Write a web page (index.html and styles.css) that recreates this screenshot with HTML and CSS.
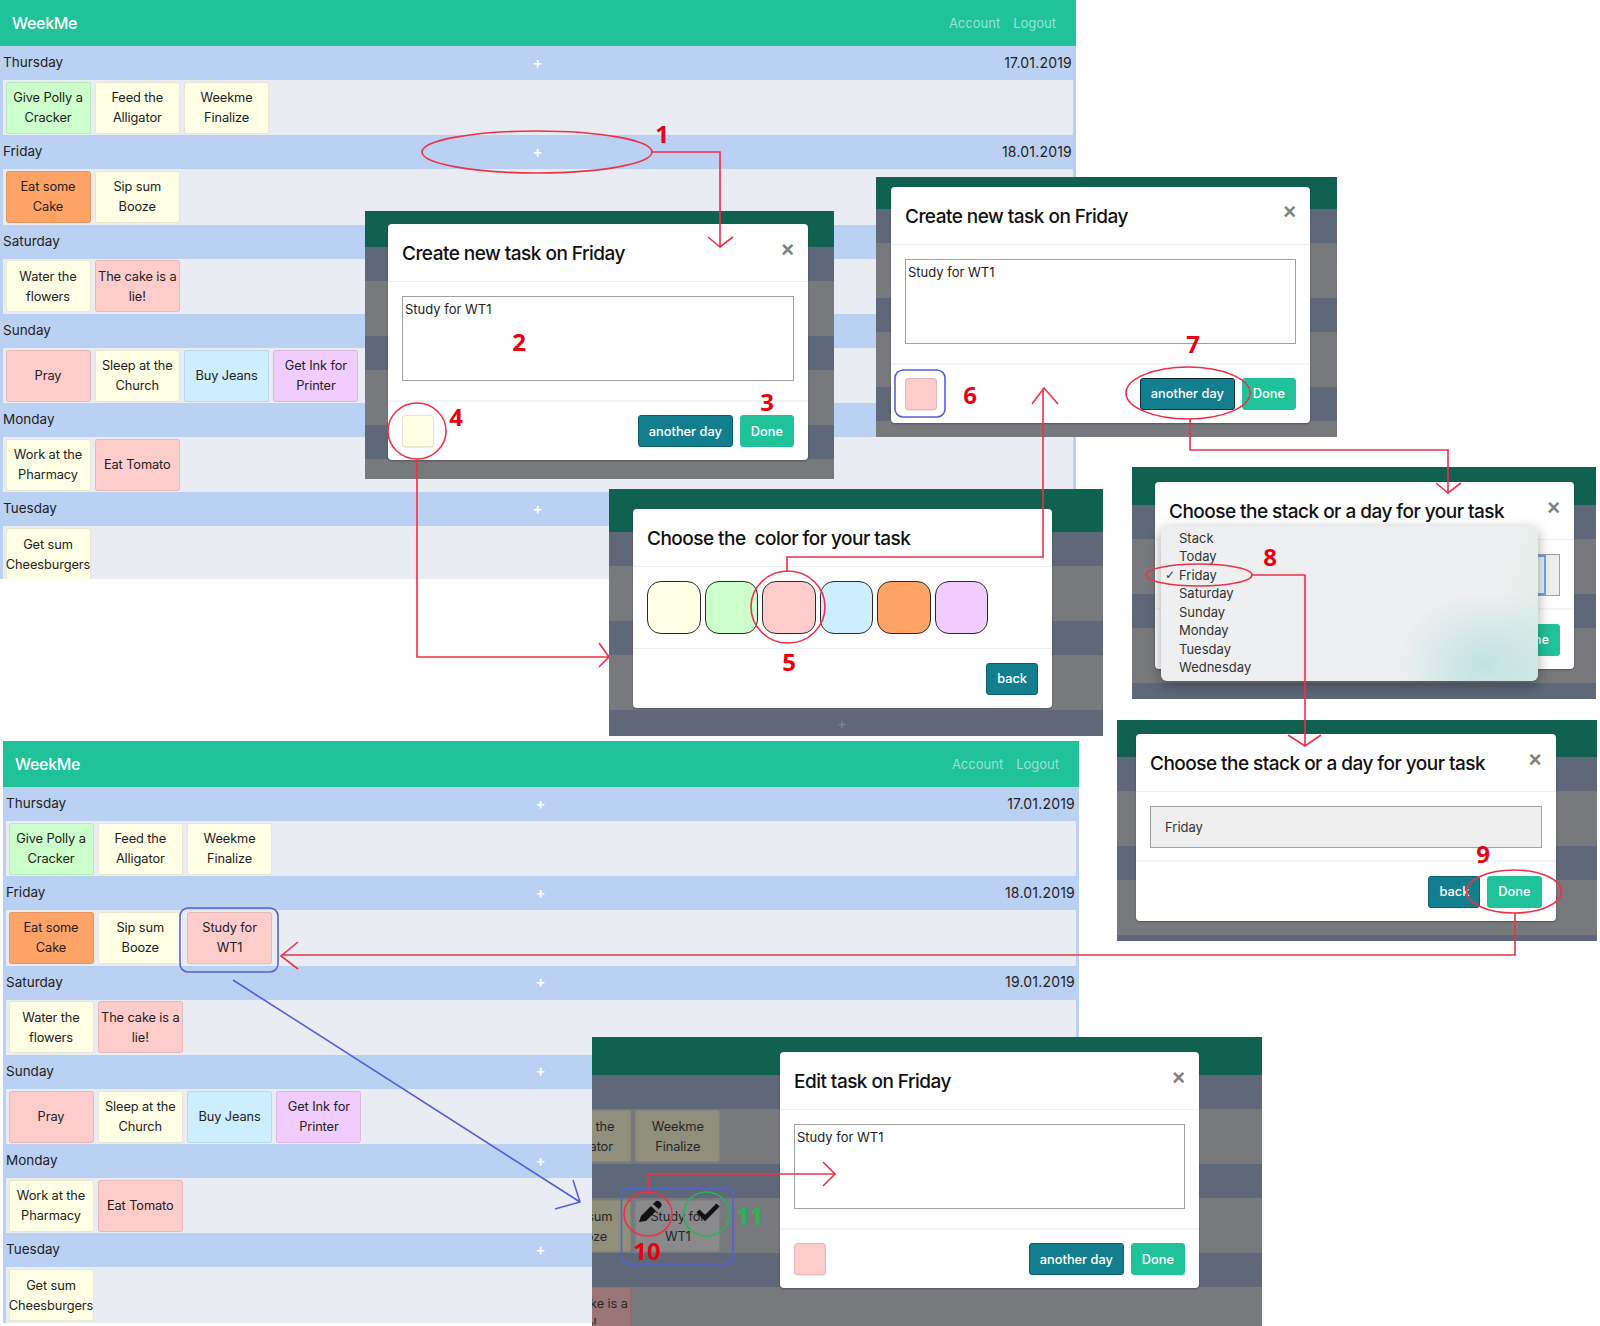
FILE: index.html
```html
<!DOCTYPE html>
<html lang="en">
<head>
<meta charset="utf-8">
<title>WeekMe flow</title>
<link rel="stylesheet" href="styles.css">
</head>
<body>
<div class="canvas">

  <section class="app app-top">
    <nav class="navbar"><span class="brand">WeekMe</span><span class="nav-links"><span>Account</span><span>Logout</span></span></nav>
    <div class="day-head"><span>Thursday</span><span class="plus">+</span><span class="date">17.01.2019</span></div>
    <div class="day-body"><div class="card green">Give Polly a Cracker</div><div class="card yellow">Feed the Alligator</div><div class="card yellow">Weekme Finalize</div></div>
    <div class="day-head"><span>Friday</span><span class="plus">+</span><span class="date">18.01.2019</span></div>
    <div class="day-body"><div class="card orange">Eat some Cake</div><div class="card yellow">Sip sum Booze</div></div>
    <div class="day-head"><span>Saturday</span><span class="plus">+</span><span class="date">19.01.2019</span></div>
    <div class="day-body"><div class="card yellow">Water the flowers</div><div class="card pink">The cake is a lie!</div></div>
    <div class="day-head"><span>Sunday</span><span class="plus">+</span><span class="date">20.01.2019</span></div>
    <div class="day-body"><div class="card pink">Pray</div><div class="card yellow">Sleep at the Church</div><div class="card blue">Buy Jeans</div><div class="card purple">Get Ink for Printer</div></div>
    <div class="day-head"><span>Monday</span><span class="plus">+</span><span class="date">21.01.2019</span></div>
    <div class="day-body"><div class="card yellow">Work at the Pharmacy</div><div class="card pink">Eat Tomato</div></div>
    <div class="day-head"><span>Tuesday</span><span class="plus">+</span><span class="date">22.01.2019</span></div>
    <div class="day-body"><div class="card yellow">Get sum Cheesburgers</div></div>
  </section>

  <section class="app app-bottom">
    <nav class="navbar"><span class="brand">WeekMe</span><span class="nav-links"><span>Account</span><span>Logout</span></span></nav>
    <div class="day-head"><span>Thursday</span><span class="plus">+</span><span class="date">17.01.2019</span></div>
    <div class="day-body"><div class="card green">Give Polly a Cracker</div><div class="card yellow">Feed the Alligator</div><div class="card yellow">Weekme Finalize</div></div>
    <div class="day-head"><span>Friday</span><span class="plus">+</span><span class="date">18.01.2019</span></div>
    <div class="day-body"><div class="card orange">Eat some Cake</div><div class="card yellow">Sip sum Booze</div><div class="card pink">Study for WT1</div></div>
    <div class="day-head"><span>Saturday</span><span class="plus">+</span><span class="date">19.01.2019</span></div>
    <div class="day-body"><div class="card yellow">Water the flowers</div><div class="card pink">The cake is a lie!</div></div>
    <div class="day-head"><span>Sunday</span><span class="plus">+</span><span class="date">20.01.2019</span></div>
    <div class="day-body"><div class="card pink">Pray</div><div class="card yellow">Sleep at the Church</div><div class="card blue">Buy Jeans</div><div class="card purple">Get Ink for Printer</div></div>
    <div class="day-head"><span>Monday</span><span class="plus">+</span><span class="date">21.01.2019</span></div>
    <div class="day-body"><div class="card yellow">Work at the Pharmacy</div><div class="card pink">Eat Tomato</div></div>
    <div class="day-head"><span>Tuesday</span><span class="plus">+</span><span class="date">22.01.2019</span></div>
    <div class="day-body"><div class="card yellow">Get sum Cheesburgers</div></div>
  </section>

  <!-- step: create task -->
  <section class="shot shot-a">
    <div class="band-cap"></div><div class="band-slate"></div><div class="band-gray"></div><div class="band-slate"></div><div class="band-gray"></div><div class="band-slate"></div><div class="band-rest gray"></div>
    <div class="modal">
      <header class="modal-head"><h2>Create new task on Friday</h2><span class="close">×</span></header>
      <div class="modal-body"><textarea class="task-input">Study for WT1</textarea></div>
      <footer class="modal-foot"><span class="swatch swatch-yellow"></span><span class="actions"><button class="btn btn-dark">another day</button><button class="btn btn-green">Done</button></span></footer>
    </div>
  </section>

  <!-- step: chosen colour -->
  <section class="shot shot-b">
    <div class="band-cap"></div><div class="band-slate"></div><div class="band-gray"></div><div class="band-slate"></div><div class="band-gray"></div><div class="band-slate"></div><div class="band-rest gray"></div>
    <div class="modal">
      <header class="modal-head"><h2>Create new task on Friday</h2><span class="close">×</span></header>
      <div class="modal-body"><textarea class="task-input">Study for WT1</textarea></div>
      <footer class="modal-foot"><span class="swatch swatch-pink"></span><span class="actions"><button class="btn btn-dark btn-focus">another day</button><button class="btn btn-green">Done</button></span></footer>
    </div>
  </section>

  <!-- step: colour chooser -->
  <section class="shot shot-c">
    <div class="band-cap"></div><div class="band-slate"></div><div class="band-gray"></div><div class="band-slate"></div><div class="band-gray"></div><div class="band-rest slate"><span class="ghost-plus">+</span></div>
    <div class="modal">
      <header class="modal-head"><h2>Choose the&nbsp; color for your task</h2></header>
      <div class="color-row">
        <span class="color yellow"></span><span class="color green"></span><span class="color pink"></span><span class="color blue"></span><span class="color orange"></span><span class="color purple"></span>
      </div>
      <footer class="modal-foot foot-end"><button class="btn btn-dark">back</button></footer>
    </div>
  </section>

  <!-- step: day dropdown open -->
  <section class="shot shot-d">
    <div class="band-cap"></div><div class="band-slate"></div><div class="band-gray"></div><div class="band-slate"></div><div class="band-gray"></div><div class="band-rest slate"></div>
    <div class="modal">
      <header class="modal-head"><h2>Choose the stack or a day for your task</h2><span class="close">×</span></header>
      <div class="modal-body body-select"><div class="select-box"><span class="select-focus"></span></div></div>
      <footer class="modal-foot foot-end"><span class="actions"><button class="btn btn-dark">back</button><button class="btn btn-green">Done</button></span></footer>
    </div>
    <ul class="menu">
      <li><span></span>Stack</li>
      <li><span></span>Today</li>
      <li><span class="tick">✓</span>Friday</li>
      <li><span></span>Saturday</li>
      <li><span></span>Sunday</li>
      <li><span></span>Monday</li>
      <li><span></span>Tuesday</li>
      <li><span></span>Wednesday</li>
    </ul>
  </section>

  <!-- step: day chosen -->
  <section class="shot shot-e">
    <div class="band-cap"></div><div class="band-slate"></div><div class="band-gray"></div><div class="band-slate"></div><div class="band-gray"></div><div class="band-rest slate"></div>
    <div class="modal">
      <header class="modal-head"><h2>Choose the stack or a day for your task</h2><span class="close">×</span></header>
      <div class="modal-body body-select"><div class="select-box select-text">Friday</div></div>
      <footer class="modal-foot foot-end"><span class="actions"><button class="btn btn-dark">back</button><button class="btn btn-green">Done</button></span></footer>
    </div>
  </section>

  <!-- step: edit task -->
  <section class="shot shot-f">
    <div class="band-cap"></div>
    <div class="band-slate"></div>
    <div class="band-gray ghost-row"><div class="ghost yellow-dim">Feed the Alligator</div><div class="ghost yellow-dim">Weekme Finalize</div></div>
    <div class="band-slate"></div>
    <div class="band-gray ghost-row"><div class="ghost yellow-dim">Sip sum Booze</div><div class="ghost gray-dim">Study for WT1</div></div>
    <div class="band-slate"></div>
    <div class="band-rest gray ghost-row"><div class="ghost pink-dim">The cake is a lie!</div></div>
    <div class="modal">
      <header class="modal-head"><h2>Edit task on Friday</h2><span class="close">×</span></header>
      <div class="modal-body"><textarea class="task-input">Study for WT1</textarea></div>
      <footer class="modal-foot"><span class="swatch swatch-pink"></span><span class="actions"><button class="btn btn-dark">another day</button><button class="btn btn-green">Done</button></span></footer>
    </div>
  </section>

  <svg class="notes" width="1600" height="1326" viewBox="0 0 1600 1326">
    <!-- red marks -->
    <g class="red">
      <ellipse cx="537" cy="152" rx="115" ry="21"/>
      <path d="M652 152H720V247M708 237L720 247L733 237"/>
      <ellipse cx="417" cy="431" rx="29" ry="28"/>
      <path d="M417 459V657H609M599 643L609 657L599 667"/>
      <ellipse cx="788" cy="607" rx="37" ry="36"/>
      <path d="M787 572V557H1043V388M1032 404L1044 388L1058 404"/>
      <ellipse cx="1188" cy="393" rx="62" ry="26"/>
      <path d="M1190 419V450H1448V493M1436 483L1448 493L1461 483"/>
      <ellipse cx="1199" cy="575" rx="53" ry="11"/>
      <path d="M1252 575H1305V746M1288 735L1305 746L1321 735"/>
      <ellipse cx="1514" cy="891.500" rx="47.500" ry="21.500"/>
      <path d="M1515 913V955H281M298 942L281 956L298 969"/>
      <ellipse cx="648" cy="1214" rx="24" ry="22"/>
      <path d="M648 1192V1174H835M823 1162L835 1174L823 1186"/>
    </g>
    <!-- blue marks -->
    <g class="indigo">
      <rect x="895" y="370" width="50" height="47" rx="8"/>
      <rect x="180" y="908" width="98" height="64" rx="8"/>
      <rect x="621.5" y="1188" width="111.5" height="76" rx="8"/>
      <path d="M233 980L580 1202M573 1180L580 1202L555 1209"/>
    </g>
    <ellipse class="green-mark" cx="706.5" cy="1214" rx="23" ry="22"/>
    <!-- edit and confirm icons -->
    <path class="glyph" d="M639 1222L641 1216L651 1206L656 1211L646 1221Z"/>
    <path class="glyph" d="M653 1204L655.500 1201.500Q657.500 1200 659.500 1201.500L661 1203Q662.500 1205 661 1207L658.500 1209Z"/>
    <path class="check" d="M698 1211L705 1218L718 1205"/>
    <text class="num" x="662" y="143">1</text>
    <text class="num" x="519" y="351">2</text>
    <text class="num" x="767" y="411">3</text>
    <text class="num" x="456" y="426">4</text>
    <text class="num" x="789" y="671">5</text>
    <text class="num" x="970" y="404">6</text>
    <text class="num" x="1193" y="353">7</text>
    <text class="num" x="1270" y="566">8</text>
    <text class="num" x="1483" y="863">9</text>
    <text class="num" x="647" y="1260">10</text>
    <text class="num num-green" x="750" y="1225">11</text>
  </svg>
</div>
</body>
</html>
```

FILE: styles.css
```css
* { box-sizing: border-box; }
html, body { margin: 0; padding: 0; background: #fff; }
body {
  font-family: Inter, "Liberation Sans", sans-serif;
  font-size: 14px;
  color: #222;
}
.canvas { position: relative; width: 1600px; height: 1326px; overflow: hidden; }

/* Screens on the board */
.app {
  position: absolute;
  width: 1076px;
  background: #bbd1f3;
  overflow: hidden;
  --body-h: 55.3px;
}
.app-top { left: 0; top: 0; height: 579px; }
.app-bottom { left: 3px; top: 741px; height: 582px; }

.navbar {
  display: flex;
  justify-content: space-between;
  align-items: center;
  height: 46px;
  padding: 0 20px 0 12px;
  background: #20c29a;
  color: #fff;
}
.brand { font-size: 16px; font-weight: 500; letter-spacing: -0.3px; }
.nav-links { display: flex; gap: 13px; font-size: 13px; color: rgba(255,255,255,.55); }

.day-head {
  display: grid;
  grid-template-columns: 1fr 1fr 1fr;
  align-items: center;
  height: 34px;
  padding: 0 4px 2px 3px;
  font-size: 13.5px;
}
.plus { text-align: center; color: #fff; font-weight: 600; font-size: 15px; }
.date { text-align: right; font-size: 14px; letter-spacing: 0.2px; }

.day-body {
  display: flex;
  gap: 4.3px;
  align-items: center;
  height: var(--body-h);
  margin: 0 3px;
  padding-left: 2.500px;
  background: #e9ecf2;
}
.card {
  display: flex;
  align-items: center;
  justify-content: center;
  flex: none;
  width: 85px;
  height: 52px;
  padding: 1px 0 0;
  border: 1px solid rgba(0,0,0,.09);
  border-radius: 3px;
  text-align: center;
  font-size: 12.8px;
  letter-spacing: -0.1px;
  line-height: 20px;
}
.yellow { background: #ffffe6; }
.green { background: #ccffcc; }
.pink { background: #ffcccc; }
.blue { background: #cceeff; }
.orange { background: #ffa366; }
.purple { background: #f0ccff; }

/* Dimmed modal screenshots */
.shot {
  position: absolute;
  display: flex;
  flex-direction: column;
  overflow: hidden;
  background: #78797d;
}
.shot-a { left: 365px; top: 211px; width: 469px; height: 268px; --cap: 36px; }
.shot-b { left: 876px; top: 177px; width: 461px; height: 260px; --cap: 32px; }
.shot-c { left: 609px; top: 489px; width: 494px; height: 247px; --cap: 43px; }
.shot-d { left: 1132px; top: 467px; width: 464px; height: 232px; --cap: 38px; }
.shot-e { left: 1117px; top: 720px; width: 480px; height: 221px; --cap: 37px; }
.shot-f { left: 592px; top: 1037px; width: 670px; height: 289px; --cap: 38px; }

.band-cap { flex: none; height: var(--cap); background: #116150; }
.band-slate { flex: none; height: 33.5px; background: #5e6878; }
.band-gray { flex: none; height: 55.7px; background: #78797d; }
.band-rest { flex: 1; min-height: 0; }
.gray { background: #78797d; }
.slate { background: #5e6878; display: flex; justify-content: center; }
.ghost-plus { color: #7d8591; font-size: 15px; margin: 4px 28px 0 0; }

.ghost-row { display: flex; gap: 4.3px; align-items: center; margin-left: -46px; }
.band-rest.ghost-row { align-items: flex-start; }
.ghost {
  display: flex;
  align-items: center;
  justify-content: center;
  flex: none;
  width: 85px;
  height: 52px;
  padding: 2px 1px 0;
  border-radius: 3px;
  text-align: center;
  font-size: 12.8px;
  letter-spacing: -0.1px;
  line-height: 20px;
  color: #26262a;
  box-shadow: inset 0 0 0 1px rgba(0,0,0,.06);
}
.yellow-dim { background: #8f8f7c; }
.gray-dim { background: #8a8a8c; }
.pink-dim { background: #9c7676; }

.modal {
  position: absolute;
  width: 420px;
  background: #fff;
  border-radius: 4px;
  box-shadow: 0 1px 2px rgba(0,0,0,.3);
}
.shot-a .modal { left: 23px; top: 13px; }
.shot-b .modal { left: 15px; top: 9.5px; width: 419px; }
.shot-c .modal { left: 24px; top: 20px; width: 419px; }
.shot-d .modal { left: 23px; top: 15px; width: 419px; }
.shot-e .modal { left: 19px; top: 14px; width: 419.5px; }
.shot-f .modal { left: 188px; top: 15px; width: 419px; }

.modal-head {
  display: flex;
  justify-content: space-between;
  align-items: center;
  height: 58px;
  padding: 2px 14px 0;
  border-bottom: 1px solid #eef0f2;
}
.modal-head h2 {
  margin: 0;
  font-size: 19px;
  font-weight: 500;
  letter-spacing: -0.53px;
  color: #111;
  white-space: nowrap;
}
.close {
  margin: -8px 0 0;
  font-size: 22px;
  line-height: 1;
  font-weight: 700;
  color: #808080;
  font-family: "Liberation Sans", sans-serif;
}
.modal-body {
  height: 120px;
  padding: 14px 14px 0;
  border-bottom: 2px solid #f4f5f6;
}
.task-input {
  display: block;
  width: 100%;
  height: 85px;
  padding: 3px 2px;
  border: 1px solid #a0a0a0;
  border-radius: 0;
  resize: none;
  font: 13px/18px Inter, "Liberation Sans", sans-serif;
  color: #222;
}
.modal-foot {
  display: flex;
  justify-content: space-between;
  align-items: center;
  height: 58px;
  padding: 0 14px;
}
.foot-end { justify-content: flex-end; height: 59px; }
.actions { display: flex; gap: 7px; }
.swatch {
  width: 32px;
  height: 32px;
  border: 1px solid rgba(0,0,0,.1);
  border-radius: 4px;
  box-shadow: 0 1px 1px rgba(0,0,0,.1);
}
.swatch-yellow { background: #ffffe6; }
.swatch-pink { background: #ffcccc; }

.btn {
  height: 32px;
  padding: 0 10px;
  border: 1px solid transparent;
  border-radius: 3px;
  font: 500 12.8px Inter, "Liberation Sans", sans-serif;
  color: #fff;
}
.btn-dark { background: #137f8e; border-color: #0d5f6b; }
.btn-focus { border-color: #072f36; }
.btn-green { background: #20c29a; border-color: #20c29a; }

.color-row {
  display: flex;
  gap: 4px;
  align-items: center;
  height: 82px;
  padding: 0 14px;
  border-bottom: 1px solid #eef0f2;
}
.color {
  width: 53.5px;
  height: 53px;
  border: 1px solid #2b2b2b;
  border-radius: 14px;
}

.body-select { height: 70px; padding: 14px; }
.select-box {
  display: flex;
  align-items: center;
  height: 41.5px;
  padding: 0 14px;
  border: 1px solid #a0a0a0;
  background: #eeeeee;
  color: #333;
  font-size: 13px;
}
.shot-d .select-box { padding-left: 0; padding-right: 13px; }
.select-focus {
  flex: 1;
  align-self: stretch;
  border: 2px solid #6fa3ef;
}

.menu {
  position: absolute;
  left: 29px;
  top: 59px;
  width: 377px;
  height: 155px;
  margin: 0;
  padding: 2.500px 0 0;
  list-style: none;
  border-radius: 6px;
  background:
    radial-gradient(ellipse 90px 75px at 86% 90%, rgba(190,225,225,.95), rgba(238,239,240,0) 100%),
    linear-gradient(105deg, rgba(238,239,240,0) 85%, rgba(200,235,222,.6) 100%),
    #eeeff0;
  box-shadow: 0 4px 14px rgba(0,0,0,.35);
  color: #333;
}
.menu li {
  display: grid;
  grid-template-columns: 18px 1fr;
  height: 18.5px;
  line-height: 18.5px;
  font-size: 13px;
}
.tick { font-family: "DejaVu Sans", sans-serif; font-size: 12px; text-align: right; padding-right: 4px; }

/* Hand-drawn annotation layer */
.notes { position: absolute; left: 0; top: 0; pointer-events: none; }
.notes .red ellipse, .notes .red path { fill: none; stroke: #ef3048; stroke-width: 1.6; }
.notes .indigo rect, .notes .indigo path { fill: none; stroke: #5361dc; stroke-width: 1.6; }
.notes .green-mark { fill: none; stroke: #28b45a; stroke-width: 1.6; }
.notes .glyph { fill: #111; }
.notes .check { fill: none; stroke: #111; stroke-width: 4.5; }
.notes .num {
  fill: #e8000f;
  font-family: "Open Sans", sans-serif;
  font-size: 24px;
  font-weight: 700;
  text-anchor: middle;
}
.notes .num-green { fill: #1db954; }
```
